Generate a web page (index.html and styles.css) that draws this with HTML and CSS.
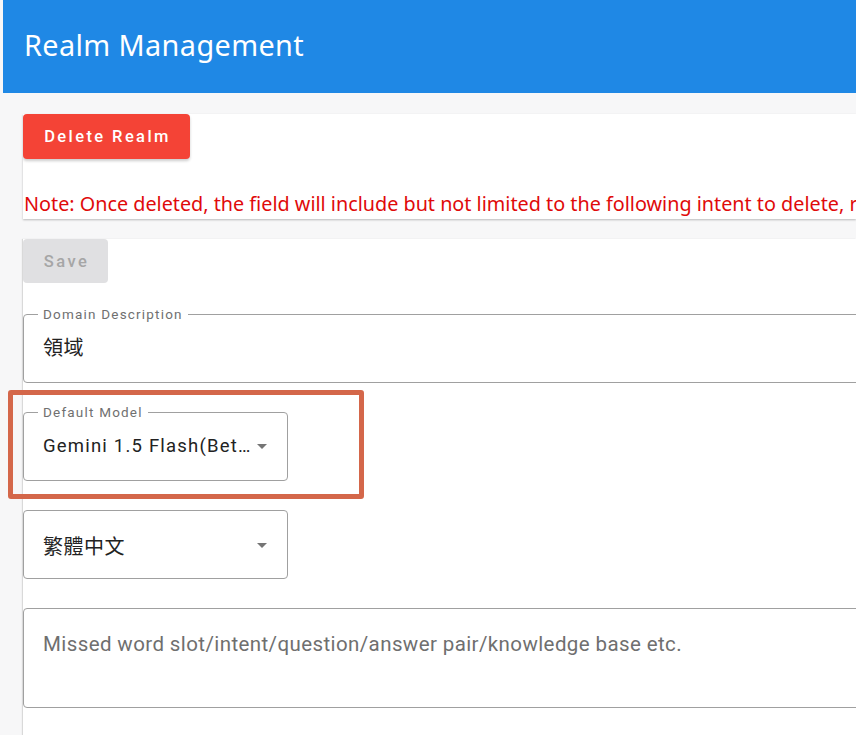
FILE: index.html
```html
<!DOCTYPE html>
<html lang="en">
<head>
<meta charset="utf-8">
<title>Realm Management</title>
<link rel="stylesheet" href="styles.css">
</head>
<body>
<header class="topbar">
  <h1 class="title">Realm Management</h1>
</header>
<main class="content">
  <section class="card danger-card">
    <button class="btn btn-danger" type="button">Delete Realm</button>
    <p class="note">Note: Once deleted, the field will include but not limited to the following intent to delete, r</p>
  </section>
  <section class="card form-card">
    <button class="btn btn-disabled" type="button">Save</button>
    <fieldset class="field field-wide">
      <legend class="field-label">Domain Description</legend>
      <div class="field-value cjk">領域</div>
    </fieldset>
    <div class="highlight-wrap">
      <fieldset class="field field-select">
        <legend class="field-label">Default Model</legend>
        <div class="field-value select-value"><span class="ellipsis">Gemini 1.5 Flash(Beta)</span><span class="caret"></span></div>
      </fieldset>
      <div class="highlight"></div>
    </div>
    <div class="field field-select field-plain">
      <div class="field-value select-value"><span class="ellipsis cjk">繁體中文</span><span class="caret"></span></div>
    </div>
    <div class="field field-wide field-area">
      <div class="placeholder">Missed word slot/intent/question/answer pair/knowledge base etc.</div>
    </div>
  </section>
</main>
</body>
</html>
```
FILE: styles.css
```css
html, body {
  margin: 0;
  padding: 0;
  overflow: hidden;
}
body {
  background: #f7f7f8;
  font-family: Roboto, "Noto Sans", sans-serif;
  width: 856px;
  height: 735px;
}
.topbar {
  margin-left: 3px;
  height: 93px;
  background: #1f88e5;
  display: flex;
  align-items: center;
}
.title {
  margin: 0 0 5px 21px;
  color: #fff;
  font-family: "Noto Sans", sans-serif;
  font-weight: 400;
  font-size: 28.8px;
  letter-spacing: 0.4px;
}
.content {
  padding: 21px 0 0 23px;
  width: 833px;
}
.card {
  background: #fff;
}
.danger-card {
  height: 105px;
  box-shadow: 0 1px 2px rgba(0,0,0,0.25);
  overflow: hidden;
}
.btn {
  display: block;
  border: 0;
  border-radius: 4px;
  font-family: Roboto, sans-serif;
  font-weight: 500;
  font-size: 16.5px;
  letter-spacing: 2.4px;
  padding: 0 0 0 2px;
  cursor: pointer;
}
.btn-danger {
  width: 167px;
  height: 45px;
  background: #f44336;
  color: #fff;
  box-shadow: 0 2px 3px rgba(0,0,0,0.2);
}
.note {
  margin: 32px 0 0 1px;
  color: #e00a0a;
  font-family: "Noto Sans", sans-serif;
  font-size: 19.8px;
  white-space: nowrap;
  line-height: 26px;
}
.form-card {
  margin-top: 20px;
  height: 520px;
  box-shadow: -1px 0 1px rgba(0,0,0,0.12);
}
.btn-disabled {
  width: 85px;
  height: 44px;
  background: #e0e0e2;
  color: #a6a6a6;
}
.field {
  margin: 0;
  box-sizing: border-box;
  border: 1px solid #a0a0a0;
  border-radius: 4px;
  padding: 0 0 0 19px;
  min-inline-size: 0;
}
fieldset.field {
  padding-top: 0;
}
.field-label {
  margin-left: -5px;
  padding: 0 5px;
  font-family: Roboto, sans-serif;
  font-size: 13.5px;
  letter-spacing: 1.2px;
  color: #707070;
  line-height: 16px;
}
.field-wide {
  width: 1000px;
  margin-top: 23px;
  height: 77px;
}
.field-value {
  font-size: 18.5px;
  color: #222;
  letter-spacing: 1.2px;
}
.cjk {
  font-family: "Noto Sans CJK TC", sans-serif;
  font-size: 20px;
  letter-spacing: 0.5px;
}
.field-wide .field-value {
  margin-top: 10px;
}
.highlight-wrap {
  position: relative;
  margin-top: 21px;
}
.field-select {
  width: 265px;
  height: 77px;
}
.select-value {
  display: flex;
  align-items: center;
  margin-top: 15px;
}
.ellipsis {
  width: 213px;
  white-space: nowrap;
  overflow: hidden;
  text-overflow: ellipsis;
}
.caret {
  width: 0;
  height: 0;
  border-left: 5.5px solid transparent;
  border-right: 5.5px solid transparent;
  border-top: 5.5px solid #757575;
  margin-left: 1px;
}
.highlight {
  position: absolute;
  left: -15px;
  top: -14px;
  width: 346px;
  height: 99px;
  border: 5px solid #d4674a;
  border-radius: 3px;
}
.field-plain {
  margin-top: 29px;
  height: 69px;
  display: flex;
  align-items: center;
}
.field-plain .select-value {
  margin-top: 2px;
}
.field-area {
  margin-top: 29px;
  height: 100px;
  padding-top: 23px;
}
.placeholder {
  font-family: Roboto, sans-serif;
  font-size: 20.5px;
  color: #6f6f6f;
  letter-spacing: 0.4px;
}
```
